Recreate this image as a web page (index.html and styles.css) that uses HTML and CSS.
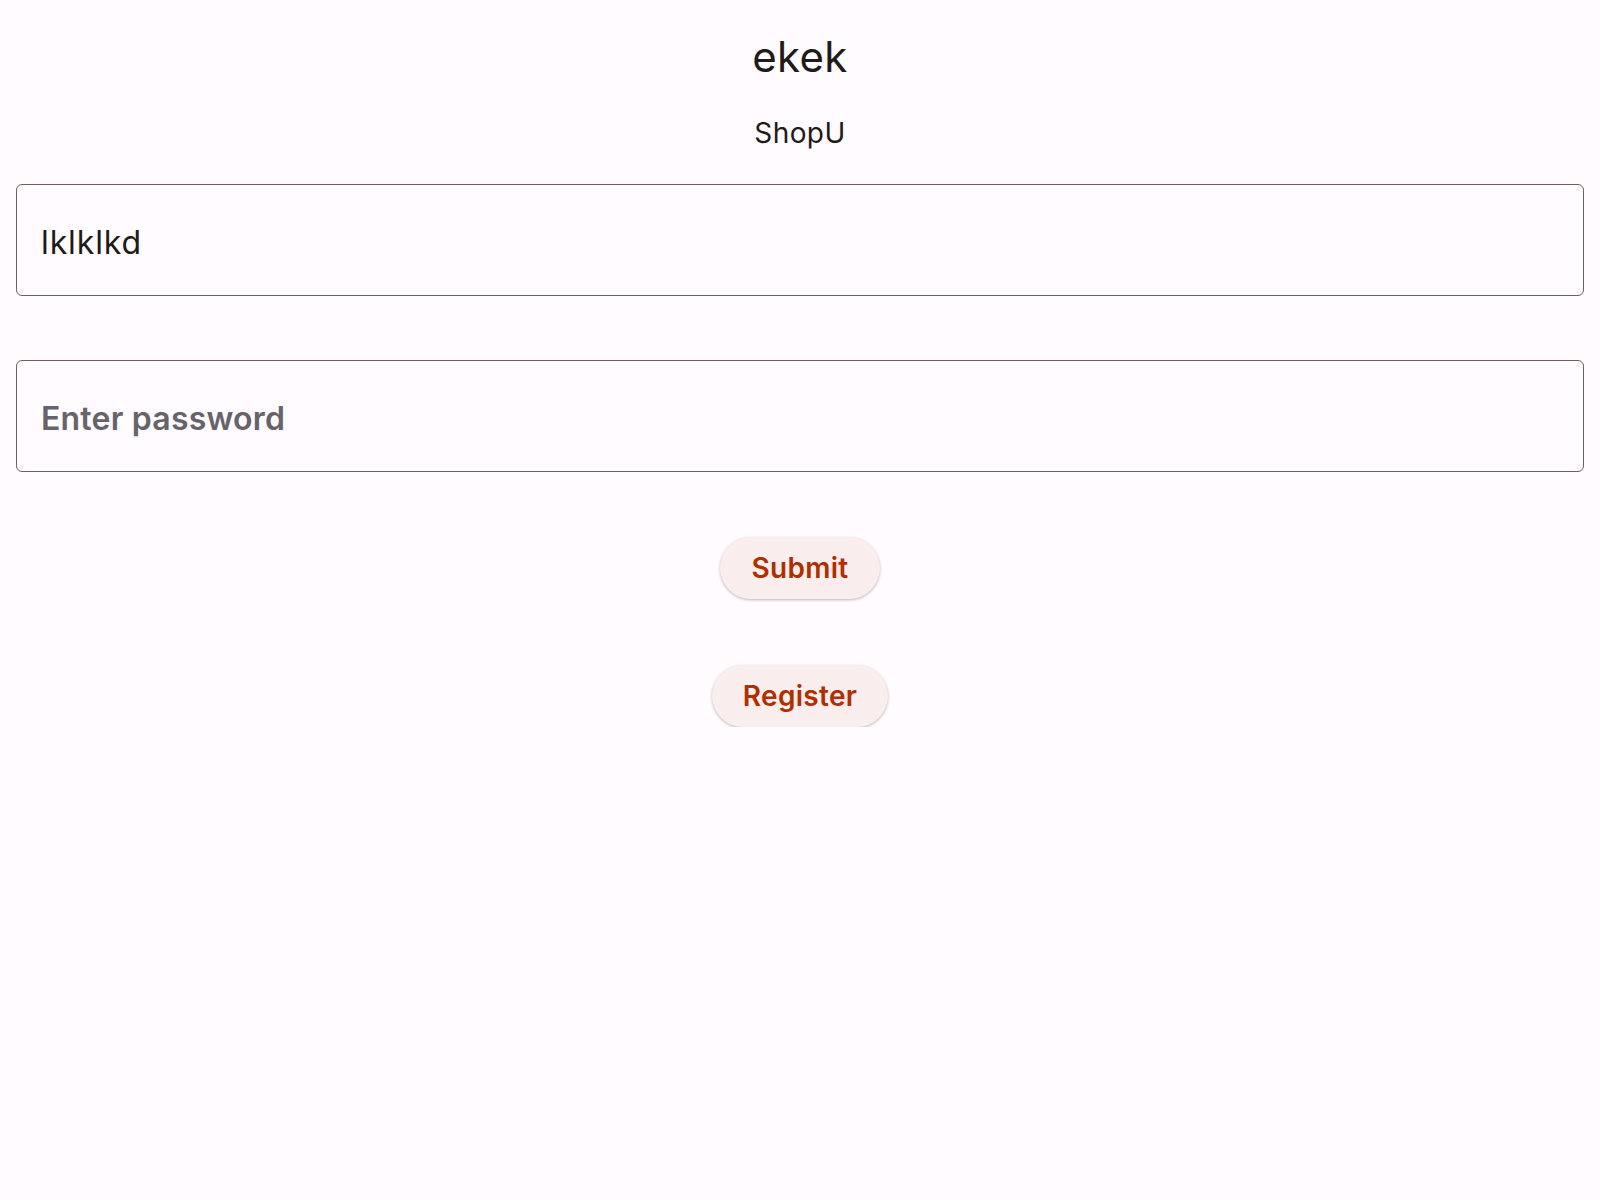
FILE: index.html
```html
<!DOCTYPE html>
<html>
<head>
<meta charset="utf-8">
<link rel="stylesheet" href="styles.css">
</head>
<body>
<main class="page">
  <h1 class="title">ekek</h1>
  <p class="subtitle">ShopU</p>
  <div class="field"><span class="value">lklklkd</span></div>
  <div class="field"><span class="placeholder">Enter password</span></div>
  <button class="btn">Submit</button>
  <button class="btn">Register</button>
</main>
</body>
</html>
```
FILE: styles.css
```css
html, body {
  margin: 0;
  padding: 0;
  background: #fffbff;
}
body {
  font-family: Inter, "Noto Sans", sans-serif;
  color: #201a19;
}
.page {
  display: flex;
  flex-direction: column;
  align-items: center;
  padding: 31px 16px 0;
}
.title {
  margin: 0;
  font-size: 42px;
  font-weight: 400;
  line-height: 52px;
  height: 52px;
  letter-spacing: 0.3px;
}
.subtitle {
  margin: 33px 0 0;
  font-size: 28px;
  line-height: 35px;
  font-weight: 400;
  letter-spacing: 0.4px;
}
.field {
  box-sizing: border-box;
  align-self: stretch;
  height: 112px;
  border: 1px solid #725e5c;
  border-radius: 6px;
  display: flex;
  align-items: center;
  padding: 4px 24px 0;
  margin-top: 33px;
}
.field + .field {
  margin-top: 64px;
}
.value {
  font-size: 32px;
  letter-spacing: 0.9px;
  color: #201a19;
}
.placeholder {
  font-size: 32px;
  font-weight: 600;
  letter-spacing: 0.2px;
  color: #67636a;
}
.btn {
  font-family: Inter, "Noto Sans", sans-serif;
  height: 62px;
  border: none;
  border-radius: 31px;
  background: #f9eeed;
  color: #b02f00;
  font-size: 28px;
  font-weight: 600;
  letter-spacing: 0.3px;
  padding: 0 31px;
  margin-top: 65px;
  box-shadow: 0 1px 3px rgba(0,0,0,0.28);
}
.btn + .btn {
  margin-top: 66px;
}
```
